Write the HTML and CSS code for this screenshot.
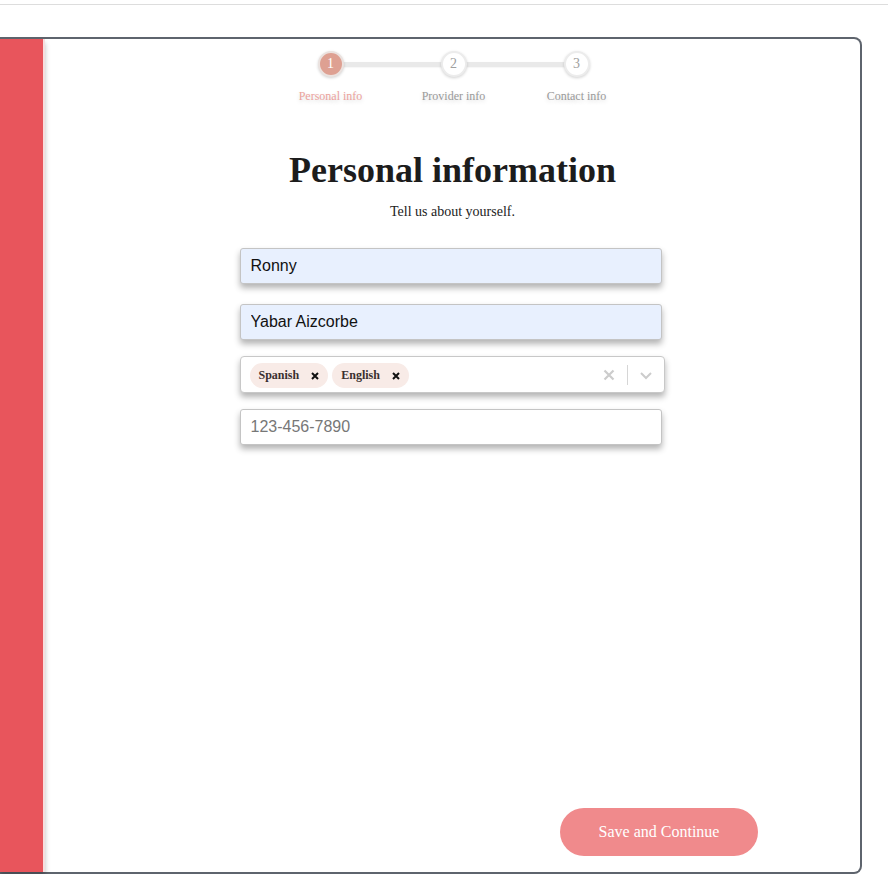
FILE: index.html
```html
<!DOCTYPE html>
<html lang="en">
<head>
<meta charset="utf-8">
<title>Personal information</title>
<link rel="stylesheet" href="styles.css">
</head>
<body>
<div class="topbar"></div>
<div class="card">
  <aside class="sidebar"></aside>
  <main class="main">
    <ol class="stepper">
      <li class="step active"><span class="dot">1</span><span class="label">Personal info</span></li>
      <li class="step"><span class="dot">2</span><span class="label">Provider info</span></li>
      <li class="step"><span class="dot">3</span><span class="label">Contact info</span></li>
    </ol>
    <h1 class="title">Personal information</h1>
    <p class="subtitle">Tell us about yourself.</p>
    <form class="form">
      <input class="field filled" type="text" value="Ronny">
      <input class="field filled gap-lg" type="text" value="Yabar Aizcorbe">
      <div class="select">
        <div class="chips">
          <span class="chip">Spanish <svg class="chip-x" width="8" height="8" viewBox="0 0 8 8"><path d="M1 1 L7 7 M7 1 L1 7" stroke="#111" stroke-width="2" fill="none"/></svg></span>
          <span class="chip">English <svg class="chip-x" width="8" height="8" viewBox="0 0 8 8"><path d="M1 1 L7 7 M7 1 L1 7" stroke="#111" stroke-width="2" fill="none"/></svg></span>
        </div>
        <div class="indicators">
          <svg class="ind" width="20" height="20" viewBox="0 0 20 20"><path d="M5.5 5.5 L14.5 14.5 M14.5 5.5 L5.5 14.5" stroke="#cccccc" stroke-width="2.2" fill="none"/></svg>
          <span class="sep"></span>
          <svg class="ind" width="20" height="20" viewBox="0 0 20 20"><path d="M5 8 L10 13 L15 8" stroke="#cccccc" stroke-width="2" fill="none"/></svg>
        </div>
      </div>
      <input class="field" type="text" placeholder="123-456-7890">
    </form>
    <div class="actions">
      <button class="save" type="button">Save and Continue</button>
    </div>
  </main>
</div>
</body>
</html>
```

FILE: styles.css
```css
html, body {
  margin: 0;
  padding: 0;
  background: #ffffff;
  font-family: "Liberation Serif", "Times New Roman", serif;
}

.topbar {
  height: 4px;
  border-bottom: 1px solid #dddddd;
}

.card {
  box-sizing: border-box;
  margin-top: 32px;
  width: 862px;
  height: 837px;
  border: 2px solid #5e646d;
  border-left: none;
  border-radius: 0 8px 8px 0;
  display: flex;
}

.sidebar {
  width: 43px;
  flex: none;
  background: #e8555c;
  border-right: 2px solid #f6dede;
  box-shadow: 0 4px 5px rgba(0, 0, 0, 0.25);
}

.main {
  flex: 1;
  display: flex;
  flex-direction: column;
  align-items: center;
  padding-top: 12px;
  padding-bottom: 16px;
}

.stepper {
  list-style: none;
  margin: 0;
  padding: 0;
  display: flex;
  margin-left: 2px;
}

.step {
  position: relative;
  width: 123px;
  display: flex;
  flex-direction: column;
  align-items: center;
}

.step:not(:last-child)::after {
  content: "";
  position: absolute;
  left: 61px;
  width: 123px;
  top: 11px;
  height: 4px;
  background: #e9e9e9;
  box-shadow: 0 1px 2px rgba(0, 0, 0, 0.12);
  z-index: 0;
}

.dot {
  position: relative;
  z-index: 1;
  box-sizing: border-box;
  width: 26px;
  height: 26px;
  border-radius: 50%;
  background: #ffffff;
  border: 2px solid #ececec;
  box-shadow: 0 1px 3px rgba(0, 0, 0, 0.18);
  color: #a0a0a0;
  font-size: 14px;
  display: flex;
  align-items: center;
  justify-content: center;
}

.step.active .dot {
  background: #dea092;
  color: #ffffff;
  border-color: #ebe2df;
}

.label {
  margin-top: 12px;
  font-size: 12px;
  line-height: 14px;
  color: #9a9a9a;
  text-shadow: 0 2px 4px rgba(0, 0, 0, 0.15);
  white-space: nowrap;
}

.step.active .label {
  color: #eba29c;
}

.title {
  margin: 47px 0 0;
  font-size: 36px;
  line-height: 41px;
  font-weight: bold;
  color: #1c1c1c;
}

.subtitle {
  margin: 13px 0 0;
  font-size: 14px;
  line-height: 16px;
  color: #222222;
}

.form {
  margin-top: 28px;
  width: 422px;
  display: flex;
  flex-direction: column;
  gap: 16px;
  margin-left: -4px;
}

.field {
  box-sizing: border-box;
  width: 422px;
  height: 36px;
  padding: 0 10px;
  border: 1px solid #c4c4c4;
  border-radius: 3px;
  background: #ffffff;
  box-shadow: 0 4px 6px rgba(0, 0, 0, 0.3);
  font-family: "Liberation Sans", Arial, sans-serif;
  font-size: 16px;
  color: #111111;
  outline: none;
}

.field.filled {
  background: #e8f0fe;
}

.field.gap-lg {
  margin-top: 4px;
}

.field::placeholder {
  color: #777777;
}

.select {
  box-sizing: border-box;
  width: 425px;
  height: 37px;
  border: 1px solid #c8c8c8;
  border-radius: 4px;
  background: #ffffff;
  box-shadow: 0 4px 6px rgba(0, 0, 0, 0.3);
  display: flex;
  align-items: center;
  padding-left: 9px;
}

.chips {
  flex: 1;
  display: flex;
  gap: 4px;
  padding-top: 2px;
}

.chip {
  display: inline-flex;
  align-items: center;
  height: 25px;
  padding: 0 9px 0 9px;
  border-radius: 13px;
  background: #f8ebe7;
  font-size: 12px;
  font-weight: bold;
  color: #3a3030;
}

.chip-x {
  display: block;
  margin-left: 12px;
}

.indicators {
  display: flex;
  align-items: center;
  padding-right: 4px;
}

.ind {
  display: block;
  margin: 0 4px;
}

.sep {
  width: 1px;
  height: 20px;
  background: #d6d6d6;
  margin: 0 4px;
}

.actions {
  margin-top: auto;
  align-self: stretch;
  display: flex;
  justify-content: flex-end;
  padding-right: 102px;
}

.save {
  width: 198px;
  height: 48px;
  border: none;
  border-radius: 24px;
  background: #f08a8c;
  color: #ffffff;
  font-family: "Liberation Serif", "Times New Roman", serif;
  font-size: 16px;
  cursor: pointer;
}
```
